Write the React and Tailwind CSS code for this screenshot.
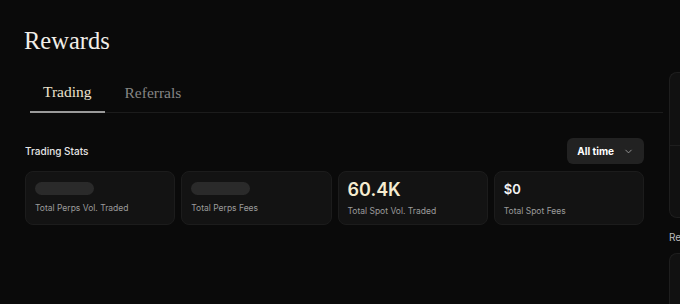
import React from 'react';
import { ChevronDown } from 'lucide-react';

const STATS = [
  { label: 'Total Perps Vol. Traded', value: null },
  { label: 'Total Perps Fees', value: null },
  { label: 'Total Spot Vol. Traded', value: '60.4K', big: true },
  { label: 'Total Spot Fees', value: '$0' },
];

function StatCard({ label, value, big }) {
  return (
    <div className="h-[54px] rounded-lg border border-[#1c1c1c] bg-[#131313] px-[9px] pt-[10px]">
      {value === null ? (
        <div className="h-[13px] w-[59px] rounded-full bg-[#2a2a2a]" />
      ) : big ? (
        <div className="-mt-[1px] text-[18px] font-semibold leading-[18px] text-[#f5ecd0]">{value}</div>
      ) : (
        <div className="-mt-[1px] text-[13px] font-semibold leading-[16px] text-[#f2f2f2]">{value}</div>
      )}
      <div className={`${value === null ? 'mt-[7px]' : big ? 'mt-[6px]' : 'mt-[8px]'} text-[8.5px] leading-[12px] text-[#9b9b9b]`}>{label}</div>
    </div>
  );
}

export default function App() {
  return (
    <div className="flex h-[304px] w-[680px] overflow-hidden bg-[#0a0a0a] font-['Inter',sans-serif]">
      {/* Main column */}
      <div className="w-[669px] shrink-0 pl-[25px] pr-[25px] pt-[25px]">
        <h1 className="-ml-[1px] font-['Liberation_Serif',serif] text-[24.5px] leading-[32px] text-[#f1eee8]">Rewards</h1>

        {/* Tabs */}
        <div className="ml-[5px] -mr-[19px] mt-[15px] flex border-b border-[#1c1c1c] font-['Liberation_Serif',serif] text-[15.5px] leading-[20px]">
          <button className="-mb-px border-b-2 border-[#9a9a9a] px-[13px] pt-[10px] pb-[9px] text-[#ece3cd]">Trading</button>
          <button className="-mb-px px-[20px] pt-[10px] pb-[9px] text-[#858585]">Referrals</button>
        </div>

        {/* Stats header */}
        <div className="mt-[25px] flex h-[26px] items-center justify-between">
          <span className="text-[10px] font-medium text-[#e6e6e6]">Trading Stats</span>
          <button className="flex h-[26px] items-center gap-[9px] rounded-md bg-[#222222] pl-[10px] pr-[10px] text-[10px] font-bold text-white">
            All time
            <ChevronDown className="h-[11px] w-[11px] text-[#9a9a9a]" strokeWidth={2} />
          </button>
        </div>

        <div className="mt-[7px] grid grid-cols-4 gap-[6px]">
          {STATS.map((s) => (
            <StatCard key={s.label} {...s} />
          ))}
        </div>
      </div>

      {/* Right sidebar (clipped) */}
      <div className="flex-1 overflow-hidden pt-[72px]">
        <div className="h-[146px] rounded-tl-lg rounded-bl-lg border border-r-0 border-[#1e1e1e] bg-[#111111]">
          <div className="h-[73px] border-b border-[#1e1e1e]" />
        </div>
        <div className="mt-[12px] text-[10px] leading-[14px] text-[#bdbdbd] whitespace-nowrap">Re</div>
        <div className="mt-[9px] h-[60px] rounded-tl-lg border border-r-0 border-[#1e1e1e] bg-[#111111]" />
      </div>
    </div>
  );
}
